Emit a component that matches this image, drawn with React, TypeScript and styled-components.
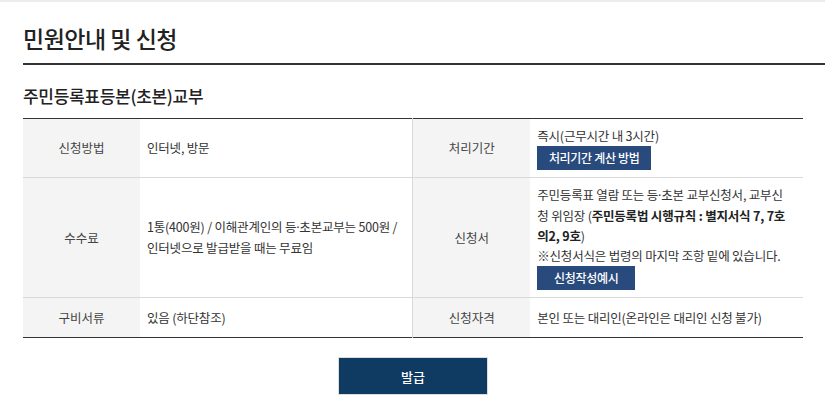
import React from 'react';
import styled, { createGlobalStyle } from 'styled-components';

const GlobalStyle = createGlobalStyle`
  html, body {
    margin: 0;
    padding: 0;
    background: #fff;
  }
  body {
    font-family: "Noto Sans CJK KR", "Noto Sans", sans-serif;
    color: #333;
    border-top: 2px solid #ececec;
  }
`;

const Page = styled.div`
  padding: 0 0 0 23px;
`;

const Title = styled.h2`
  margin: 0;
  padding: 22px 0 11px;
  border-bottom: 2px solid #333;
  color: #222;
  font-size: 23px;
  font-weight: 500;
  line-height: 28px;
  letter-spacing: -0.5px;
`;

const Content = styled.div`
  width: 780px;
`;

const SubTitle = styled.h3`
  margin: 0;
  padding: 21px 0 12px;
  color: #222;
  font-size: 17px;
  font-weight: 500;
  line-height: 20px;
  letter-spacing: -0.3px;
`;

const Table = styled.table`
  width: 100%;
  border-collapse: collapse;
  table-layout: fixed;
  border-top: 1px solid #333;
  border-bottom: 1px solid #333;
  font-size: 12.5px;
  line-height: 20px;
`;

const Row = styled.tr`
  & + & > * {
    border-top: 1px solid #d9d9d9;
  }
`;

const Head = styled.th<{ $divided?: boolean }>`
  width: 103px;
  height: 25px;
  padding: 7px;
  background: #f4f4f4;
  color: #444;
  font-weight: 400;
  text-align: center;
  border-left: ${(p) => (p.$divided ? '1px solid #d9d9d9' : 'none')};
`;

const Cell = styled.td`
  height: 25px;
  padding: 7px;
  color: #333;
  text-align: left;
  vertical-align: middle;
  letter-spacing: -0.2px;
`;

const Dot = styled.span`
  font-family: "Noto Sans", sans-serif;
`;

const Strong = styled.strong`
  font-weight: 700;
  color: #222;
`;

const SmallButton = styled.button<{ $width: number }>`
  display: block;
  width: ${(p) => p.$width}px;
  height: 24px;
  margin: 0;
  padding: 0;
  border: none;
  background: #284a7c;
  color: #fff;
  font-family: inherit;
  font-size: 12px;
  font-weight: 500;
  line-height: 24px;
  letter-spacing: -0.3px;
  text-align: center;
  cursor: pointer;
`;

const Actions = styled.div`
  display: flex;
  justify-content: center;
  padding: 19px 0 20px;
`;

const IssueButton = styled.button`
  width: 150px;
  height: 38px;
  border: 1px solid #ddd;
  background: #0f3a62;
  color: #fff;
  font-family: inherit;
  font-size: 13px;
  font-weight: 500;
  cursor: pointer;
`;

const App: React.FC = () => {
  return (
    <Page>
      <GlobalStyle />
      <Title>민원안내 및 신청</Title>
      <Content>
        <SubTitle>주민등록표등본(초본)교부</SubTitle>
        <Table>
          <tbody>
            <Row>
              <Head>신청방법</Head>
              <Cell>인터넷, 방문</Cell>
              <Head $divided>처리기간</Head>
              <Cell>
                즉시(근무시간 내 3시간)
                <SmallButton $width={114}>처리기간 계산 방법</SmallButton>
              </Cell>
            </Row>
            <Row>
              <Head>수수료</Head>
              <Cell>
                1통(400원) / 이해관계인의 등<Dot>·</Dot>초본교부는 500원 /<br />
                인터넷으로 발급받을 때는 무료임
              </Cell>
              <Head $divided>신청서</Head>
              <Cell>
                주민등록표 열람 또는 등<Dot>·</Dot>초본 교부신청서, 교부신
                <br />청 위임장 (<Strong>주민등록법 시행규칙 : 별지서식 7, 7호</Strong>
                <br />
                <Strong>의2, 9호</Strong>)
                <br />※신청서식은 법령의 마지막 조항 밑에 있습니다.
                <SmallButton $width={98}>신청작성예시</SmallButton>
              </Cell>
            </Row>
            <Row>
              <Head>구비서류</Head>
              <Cell>있음 (하단참조)</Cell>
              <Head $divided>신청자격</Head>
              <Cell>본인 또는 대리인(온라인은 대리인 신청 불가)</Cell>
            </Row>
          </tbody>
        </Table>
        <Actions>
          <IssueButton>발급</IssueButton>
        </Actions>
      </Content>
    </Page>
  );
};

export default App;
